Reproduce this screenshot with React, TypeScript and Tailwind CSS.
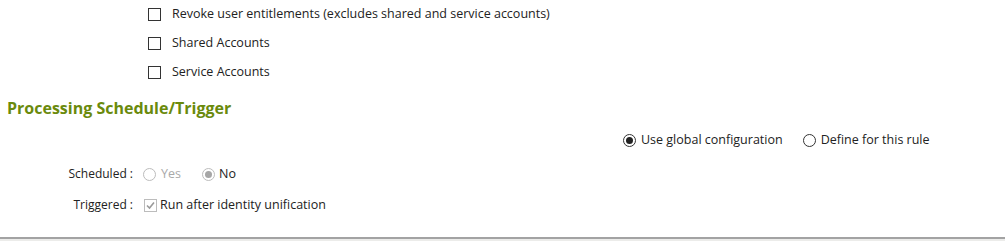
import React from 'react';

const font = { fontFamily: '"Open Sans", "Noto Sans", sans-serif' };

const Box = ({ checked = false, disabled = false }: { checked?: boolean; disabled?: boolean }) => (
    <span
        className={`inline-flex h-[13px] w-[13px] shrink-0 items-center justify-center border bg-white ${disabled ? 'border-[#bcbcbc]' : 'border-[#333]'}`}
    >
        {checked && (
            <svg width="9" height="9" viewBox="0 0 9 9">
                <path d="M1 4.5 L3.5 7 L8 1.5" fill="none" stroke="#9a9a9a" strokeWidth="1.6" />
            </svg>
        )}
    </span>
);

const Radio = ({ checked = false, disabled = false }: { checked?: boolean; disabled?: boolean }) => (
    <span
        className={`inline-flex h-[13px] w-[13px] shrink-0 items-center justify-center rounded-full border bg-white ${disabled ? 'border-[#bcbcbc]' : 'border-[#333]'}`}
    >
        {checked && <span className={`h-[7px] w-[7px] rounded-full ${disabled ? 'bg-[#a6a6a6]' : 'bg-[#222]'}`} />}
    </span>
);

export default function App() {
    return (
        <div className="flex h-[241px] w-[1005px] flex-col bg-white text-[12.5px] text-[#222]" style={font}>
            {/* account options */}
            <div className="flex flex-col gap-[13px] pl-[148px] pt-[6px]">
                <label className="flex h-[16px] items-center gap-[11px]">
                    <Box />
                    <span>Revoke user entitlements (excludes shared and service accounts)</span>
                </label>
                <label className="flex h-[16px] items-center gap-[11px]">
                    <Box />
                    <span>Shared Accounts</span>
                </label>
                <label className="flex h-[16px] items-center gap-[11px]">
                    <Box />
                    <span>Service Accounts</span>
                </label>
            </div>

            <h2 className="mt-[18px] pl-[7px] text-[16px] font-bold leading-[20px] text-[#6a8a0c]">
                Processing Schedule/Trigger
            </h2>

            <div className="mt-[14px] flex h-[16px] items-center pl-[623px]">
                <label className="flex items-center gap-[5px]">
                    <Radio checked />
                    <span>Use global configuration</span>
                </label>
                <label className="ml-[20px] flex items-center gap-[5px]">
                    <Radio />
                    <span>Define for this rule</span>
                </label>
            </div>

            <div className="mt-[18px] flex h-[16px] items-center">
                <span className="w-[133px] text-right text-[12px]">Scheduled :</span>
                <label className="ml-[10px] flex items-center gap-[5px] text-[#a9a9a9]">
                    <Radio disabled />
                    <span>Yes</span>
                </label>
                <label className="ml-[21px] flex items-center gap-[4px]">
                    <Radio checked disabled />
                    <span>No</span>
                </label>
            </div>

            <div className="mt-[15px] flex h-[16px] items-center">
                <span className="w-[133px] text-right text-[12px]">Triggered :</span>
                <label className="ml-[11px] flex items-center gap-[3px]">
                    <Box checked disabled />
                    <span>Run after identity unification</span>
                </label>
            </div>

            <div className="mt-auto h-[4px] border-t-2 border-[#a3a3a3] bg-[#ececea]" />
        </div>
    );
}
